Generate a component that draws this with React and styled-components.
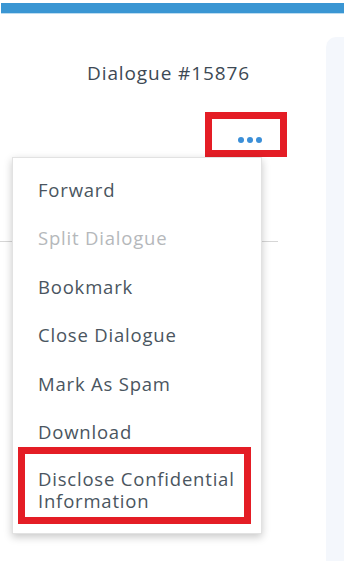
import styled, { createGlobalStyle } from 'styled-components';

const Global = createGlobalStyle`
  html, body {
    margin: 0;
    background: #fff;
    font-family: "Open Sans", "Liberation Sans", sans-serif;
  }
`;

const items = [
  { label: 'Forward' },
  { label: 'Split Dialogue', disabled: true },
  { label: 'Bookmark' },
  { label: 'Close Dialogue' },
  { label: 'Mark As Spam' },
  { label: 'Download' },
];

function App() {
  return (
    <>
      <Global />
      <Page>
        <TopBar />
        <Main>
          <Column>
            <Title>Dialogue #15876</Title>
            <Actions>
              <DotsButton>
                <Dot /><Dot /><Dot />
              </DotsButton>
              <Menu>
                {items.map((item) => (
                  <Item key={item.label} disabled={item.disabled}>{item.label}</Item>
                ))}
                <Highlight>
                  <Item $tight>Disclose Confidential Information</Item>
                </Highlight>
              </Menu>
            </Actions>
            <Divider />
          </Column>
          <Side />
        </Main>
      </Page>
    </>
  );
}

export default App;

const Page = styled.div`
  width: 344px;
  height: 561px;
  overflow: hidden;
  display: flex;
  flex-direction: column;
`;

const TopBar = styled.div`
  margin: 3px 0 0 1px;
  height: 10px;
  background: #3a96d3;
  border-bottom: 1px solid #bcdcf0;
`;

const Main = styled.div`
  flex: 1;
  display: flex;
  padding-top: 23px;
`;

const Column = styled.div`
  width: 326px;
  display: flex;
  flex-direction: column;
`;

const Title = styled.div`
  padding: 25px 0 0 87px;
  height: 35px;
  line-height: 22px;
  font-size: 19px;
  letter-spacing: 0.9px;
  color: #3d4954;
`;

const Actions = styled.div`
  position: relative;
  height: 144px;
  padding-left: 205px;
  box-sizing: border-box;
  padding-top: 15px;
`;

const DotsButton = styled.div`
  width: 82px;
  height: 45px;
  box-sizing: border-box;
  border: 7px solid #e41d25;
  display: flex;
  align-items: flex-end;
  justify-content: center;
  gap: 3px;
  padding: 0 0 7px 8px;
`;

const Dot = styled.span`
  width: 6px;
  height: 6px;
  border-radius: 50%;
  background: #3b8fd8;
`;

const Menu = styled.div`
  position: absolute;
  left: 12px;
  top: 60px;
  width: 250px;
  padding: 8px 10px 9px 0;
  box-sizing: border-box;
  background: #fff;
  border: 1px solid #e2e2e2;
  box-shadow: 0 3px 8px rgba(0, 0, 0, 0.22);
  z-index: 2;
`;

const Item = styled.div`
  height: ${(p) => (p.$tight ? 'auto' : '48.4px')};
  line-height: ${(p) => (p.$tight ? '22px' : '48.4px')};
  padding-left: ${(p) => (p.$tight ? '13px' : '25px')};
  font-size: 18.5px;
  letter-spacing: 0.8px;
  white-space: ${(p) => (p.$tight ? 'normal' : 'nowrap')};
  color: ${(p) => (p.disabled ? '#b5b8bb' : '#4a5560')};
`;

const Highlight = styled.div`
  margin: -9px 0 0 5px;
  border: 7px solid #e41d25;
  padding: 14px 0 5px;
`;

const Divider = styled.div`
  width: 278px;
  height: 1px;
  background: #d6d6d6;
`;

const Side = styled.div`
  flex: 1;
  background: #f4f7fc;
  border-top-left-radius: 10px;
`;
